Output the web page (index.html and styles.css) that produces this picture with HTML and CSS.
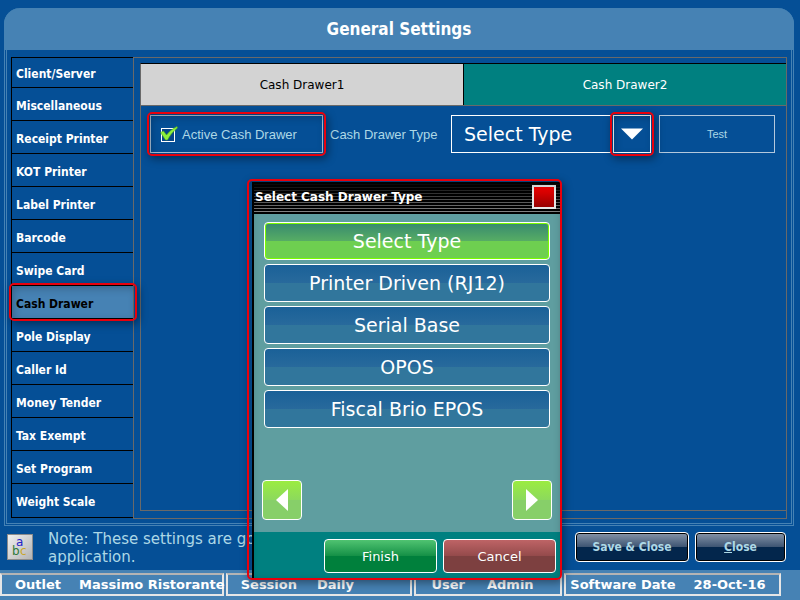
FILE: index.html
```
<!DOCTYPE html>
<html lang="en">
<head>
<meta charset="UTF-8" />
<meta name="viewport" content="width=device-width, initial-scale=1" />
<title>General Settings</title>
<link rel="stylesheet" href="styles.css">
</head>
<body>

<main class="panel">
  <h1 class="panel-title">General Settings</h1>
  <div class="panel-body">
    <nav class="side-menu">
      <a href="#">Client/Server</a>
      <a href="#">Miscellaneous</a>
      <a href="#">Receipt Printer</a>
      <a href="#">KOT Printer</a>
      <a href="#">Label Printer</a>
      <a href="#">Barcode</a>
      <a href="#">Swipe Card</a>
      <a href="#" class="active marked">Cash Drawer</a>
      <a href="#">Pole Display</a>
      <a href="#">Caller Id</a>
      <a href="#">Money Tender</a>
      <a href="#">Tax Exempt</a>
      <a href="#">Set Program</a>
      <a href="#">Weight Scale</a>
    </nav>

    <div class="content">
      <div class="content-inner">
        <div class="tabs">
          <button type="button" class="tab selected">Cash Drawer1</button>
          <button type="button" class="tab">Cash Drawer2</button>
        </div>
        <div class="drawer-row">
          <label class="active-box marked">
            <input type="checkbox" checked />
            <svg class="tick" width="18" height="18" viewBox="0 0 18 18" aria-hidden="true">
              <rect x="1.5" y="3.5" width="13" height="13" fill="#06468a" stroke="#fff"/>
              <path d="M0.5 7.5 L3.5 6 L6.5 10 Q11 4 17 1.5 L17.5 3 Q11 8 7.5 15 L5.5 15 Z" fill="#8cf03c" stroke="#4fa51f" stroke-width="0.6"/>
            </svg>
            <span>Active Cash Drawer</span>
          </label>
          <label class="type-label" for="drawerType">Cash Drawer Type</label>
          <select id="drawerType" class="type-select">
            <option>Select Type</option>
            <option>Printer Driven (RJ12)</option>
            <option>Serial Base</option>
            <option>OPOS</option>
            <option>Fiscal Brio EPOS</option>
          </select>
          <button type="button" class="type-open marked" aria-label="Open list">
            <svg width="22" height="12" viewBox="0 0 22 12"><path d="M0 0.5H22L11 11.5Z" fill="#fff"/></svg>
          </button>
          <button type="button" class="test-btn">Test</button>
        </div>
      </div>
    </div>
  </div>
</main>

<div class="note-bar">
  <button type="button" class="lang-btn" aria-label="Keyboard">
    <svg width="24" height="24" viewBox="0 0 24 24">
      <text x="8" y="11" font-size="12" fill="#2222c8">a</text>
      <text x="4" y="20" font-size="12" fill="#2d7a3a">b</text>
      <text x="12" y="20" font-size="12" fill="#c8a62c">c</text>
    </svg>
  </button>
  <p class="note">Note: These settings are go<br>application.</p>
  <button type="button" class="dark-btn save">Save &amp; Close</button>
  <button type="button" class="dark-btn close"><u>C</u>lose</button>
</div>

<footer class="status">
  <div class="cell outlet"><span>Outlet</span><span>Massimo Ristorante</span></div>
  <div class="cell session"><span>Session</span><span>Daily</span></div>
  <div class="cell user"><span>User</span><span>Admin</span></div>
  <div class="cell date"><span>Software Date</span><span>28-Oct-16</span></div>
</footer>

<section class="dialog marked" role="dialog" aria-labelledby="dialogTitle">
  <header class="dialog-head">
    <h2 id="dialogTitle">Select Cash Drawer Type</h2>
    <button type="button" class="dialog-x" aria-label="Close dialog"></button>
  </header>
  <div class="dialog-body">
    <div class="options">
      <button type="button" class="option chosen">Select Type</button>
      <button type="button" class="option">Printer Driven (RJ12)</button>
      <button type="button" class="option">Serial Base</button>
      <button type="button" class="option">OPOS</button>
      <button type="button" class="option">Fiscal Brio EPOS</button>
    </div>
    <div class="pager">
      <button type="button" class="page-btn" aria-label="Previous">
        <svg width="12" height="22" viewBox="0 0 12 22"><path d="M12 0V22L0 11Z" fill="#fff"/></svg>
      </button>
      <button type="button" class="page-btn" aria-label="Next">
        <svg width="12" height="22" viewBox="0 0 12 22"><path d="M0 0V22L12 11Z" fill="#fff"/></svg>
      </button>
    </div>
  </div>
  <div class="dialog-foot">
    <button type="button" class="foot-btn finish">Finish</button>
    <button type="button" class="foot-btn cancel">Cancel</button>
  </div>
</section>

</body>
</html>
```

FILE: styles.css
```
* {
  box-sizing: border-box;
}
body {
  margin: 0;
  min-height: 100vh;
  display: flex;
  flex-direction: column;
  position: relative;
  background: #054f96;
  font-family: "DejaVu Sans", Verdana, sans-serif;
  color: #fff;
}
button, select {
  font-family: inherit;
  color: inherit;
  margin: 0;
  padding: 0;
}
svg {
  display: block;
}

/* main panel */
.panel {
  flex: 1;
  display: flex;
  flex-direction: column;
  margin: 8px 6px 0 4px;
  border: 3px double #4682b4;
  border-top: 0;
  border-radius: 16px 16px 0 0;
}
.panel-title {
  margin: 0 -3px;
  height: 42px;
  line-height: 42px;
  text-align: center;
  font-family: "DejaVu Sans Condensed", "DejaVu Sans", sans-serif;
  font-size: 17px;
  background: #4682b4;
  border-radius: 16px 16px 0 0;
}
.panel-body {
  flex: 1;
  display: flex;
  padding: 7px 4px 4px 4px;
}
.side-menu {
  flex: none;
  width: 122px;
  margin-bottom: 1px;
  display: flex;
  flex-direction: column;
  border: 1px solid #000;
  border-right: 0;
}
.side-menu a {
  height: 33px;
  padding-left: 4px;
  line-height: 36px;
  font-family: "DejaVu Sans Condensed", "DejaVu Sans", sans-serif;
  font-size: 12px;
  font-weight: bold;
  color: #fff;
  text-decoration: none;
  white-space: nowrap;
  border-bottom: 1px solid #000;
}
.side-menu a:first-child {
  height: 30px;
  line-height: 32px;
}
.side-menu a:last-child {
  border-bottom: 0;
}
.side-menu a.active {
  color: #000;
  background: #4682b4;
}
.content {
  flex: 1;
  min-width: 0;
  display: flex;
  padding: 5px 0 7px 6px;
  border: 1px solid #696969;
}
.content-inner {
  flex: 1;
  min-width: 0;
  border: 1px solid #696969;
  border-top-color: #000;
  border-right: 0;
}

/* red highlight frames */
.marked {
  position: relative;
}
.marked::after {
  content: "";
  position: absolute;
  inset: -4px;
  border: 2px solid #e8000c;
  border-radius: 5px;
  box-shadow: 2px 3px 8px rgba(0, 0, 0, 0.4), inset 2px 3px 8px rgba(0, 0, 0, 0.25);
  pointer-events: none;
}
.side-menu .marked::after {
  inset: -3px -4px -3px -3px;
}

.tabs {
  display: flex;
  height: 42px;
  border-bottom: 1px solid #696969;
}
.tab {
  flex: 1;
  border: 0;
  background: #008080;
  font-size: 12px;
}
.tab.selected {
  background: #d3d3d3;
  color: #000;
  border-right: 1px solid #000;
}
.drawer-row {
  display: flex;
  align-items: center;
  padding: 9px 11px 0 9px;
  font-family: "Liberation Sans", Arial, sans-serif;
}
.active-box {
  flex: none;
  width: 173px;
  height: 38px;
  display: flex;
  align-items: center;
  padding-left: 9px;
  border: 1px solid #a9bfd6;
  color: #add8e6;
  font-size: 13px;
}
.active-box input {
  position: absolute;
  opacity: 0;
}
.active-box .tick {
  margin-right: 4px;
}
.type-label {
  flex: none;
  width: 121px;
  margin-left: 7px;
  color: #add8e6;
  font-size: 13px;
}
.type-select {
  flex: 1;
  min-width: 0;
  height: 38px;
  padding-left: 12px;
  appearance: none;
  background: transparent;
  border: 1px solid #fff;
  border-radius: 0;
  font-family: "DejaVu Sans", Verdana, sans-serif;
  font-size: 19px;
}
.type-open {
  flex: none;
  width: 38px;
  height: 38px;
  margin-left: 2px;
  display: flex;
  align-items: center;
  justify-content: center;
  background: transparent;
  border: 1px solid #fff;
}
.test-btn {
  flex: none;
  width: 116px;
  height: 38px;
  margin-left: 8px;
  background: transparent;
  border: 1px solid #b4c8dc;
  color: #add8e6;
  font-family: "Liberation Sans", Arial, sans-serif;
  font-size: 11px;
}

/* note and page buttons */
.note-bar {
  height: 44px;
  display: flex;
  align-items: center;
  padding: 0 14px 2px 7px;
}
.lang-btn {
  flex: none;
  width: 26px;
  height: 26px;
  border: 1px solid #8c8c8c;
  background: linear-gradient(135deg, #f0f0f0, #b4b4b4);
}
.note {
  margin: 0 auto 0 15px;
  padding-top: 2px;
  font-size: 15px;
  line-height: 18px;
  color: #add8e6;
}
.dark-btn {
  width: 114px;
  height: 30px;
  border: 1px solid #fff;
  border-radius: 4px;
  box-shadow: inset 0 0 0 1px #000;
  background: linear-gradient(#8695a9, #3d5472 50%, #03264c 51%, #03264c);
  color: #add8e6;
  font-family: "DejaVu Sans Condensed", "DejaVu Sans", sans-serif;
  font-size: 12px;
  font-weight: bold;
}
.dark-btn.close {
  width: 91px;
  margin-left: 6px;
}

/* status bar */
.status {
  height: 31px;
  display: grid;
  grid-template-columns: 224fr 187fr 148fr 217fr;
  gap: 2px;
  padding: 3px 19px 4px 0;
  background: #4682b4;
  border-bottom: 1px solid #fff;
  font-size: 13px;
  font-weight: bold;
}
.cell {
  display: flex;
  align-items: center;
  min-width: 0;
  white-space: nowrap;
  border: 2px solid #e6e6e6;
  border-top-color: #b4b4b4;
}
.outlet {
  gap: 18px;
  padding-left: 13px;
}
.session {
  gap: 20px;
  padding-left: 13px;
}
.user {
  gap: 22px;
  padding-left: 15px;
}
.date {
  gap: 18px;
  padding-left: 4px;
}

/* drawer type dialog */
.dialog {
  position: absolute;
  top: 182px;
  left: 252px;
  width: 309px;
  border-left: 2px solid #000;
  border-right: 1px solid #000;
  background: #5f9ea0;
}
.dialog::after {
  inset: -3px -2px -2px -7px;
}
.dialog-head {
  height: 32px;
  display: flex;
  align-items: center;
  justify-content: space-between;
  padding: 0 4px 2px 1px;
  background: linear-gradient(#000, rgba(0, 0, 0, 0)), repeating-linear-gradient(#000 0 2px, #8c8c8c 2px 3px);
}
.dialog-head h2 {
  margin: 0;
  font-size: 12px;
}
.dialog-x {
  width: 24px;
  height: 24px;
  border: 2px solid #e6e6e6;
  background: linear-gradient(#f00000, #960000);
}
.dialog-body {
  height: 318px;
  display: flex;
  flex-direction: column;
  justify-content: space-between;
  padding: 8px 8px 12px;
}
.options {
  display: grid;
  gap: 4px;
  padding: 0 2px;
}
.option {
  height: 38px;
  border: 1px solid #fff;
  border-radius: 4px;
  background: linear-gradient(#1a6198, #286a9c 50%, #31769c 51%, #31769c);
  font-size: 19px;
}
.option.chosen {
  box-shadow: inset 0 0 0 1px #7cfc00;
  background: linear-gradient(#37896f, #57ad64 50%, #6ecf50 51%, #6ecf50);
}
.pager {
  display: flex;
  justify-content: space-between;
}
.page-btn {
  width: 40px;
  height: 40px;
  display: flex;
  align-items: center;
  justify-content: center;
  border: 1px solid #fff;
  border-radius: 4px;
  background: linear-gradient(#9bec41, #8cd95d 50%, #87cf69 51%, #87cf69);
}
.dialog-foot {
  height: 46px;
  display: flex;
  justify-content: flex-end;
  gap: 6px;
  padding: 7px 4px 5px 0;
  background: #008080;
}
.foot-btn {
  width: 113px;
  border: 1px solid #fff;
  border-radius: 4px;
  font-size: 13px;
}
.finish {
  background: linear-gradient(#50c371, #149046 50%, #00803c 51%, #00803c);
}
.cancel {
  background: linear-gradient(#be6466, #944a4b 50%, #7d4040 51%, #7d4040);
}
```
